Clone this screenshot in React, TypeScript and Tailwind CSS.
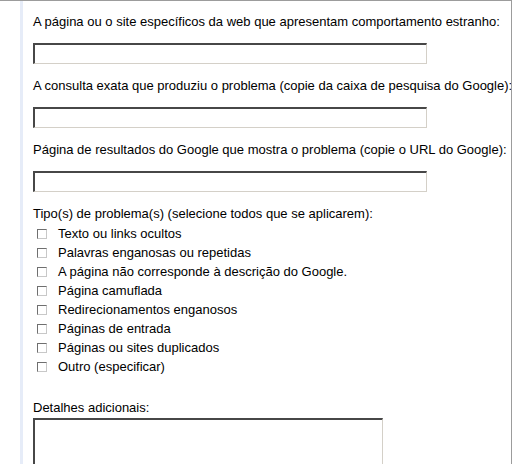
import React from 'react';

const FIELDS = [
  'A página ou o site específicos da web que apresentam comportamento estranho:',
  'A consulta exata que produziu o problema (copie da caixa de pesquisa do Google):',
  'Página de resultados do Google que mostra o problema (copie o URL do Google):',
];

const PROBLEMS = [
  'Texto ou links ocultos',
  'Palavras enganosas ou repetidas',
  'A página não corresponde à descrição do Google.',
  'Página camuflada',
  'Redirecionamentos enganosos',
  'Páginas de entrada',
  'Páginas ou sites duplicados',
  'Outro (especificar)',
];

function Checkbox() {
  return (
    <span className="w-[10px] h-[10px] shrink-0 bg-white border-t border-l border-t-[#6f6f6f] border-l-[#6f6f6f] border-b border-r border-b-[#c8c8c8] border-r-[#c8c8c8]" />
  );
}

export default function App() {
  return (
    <div className="w-[512px] h-[464px] overflow-hidden bg-white border-t border-r border-[#9c9c9c] font-['Liberation_Sans',Arial,sans-serif] text-[13px] leading-[15px] text-black">
      <div className="h-full pl-[20px]">
        <div className="h-full border-l-[3px] border-[#e6ecf8] pl-[10px] pt-[13px] whitespace-nowrap">
          {/* Text fields */}
          {FIELDS.map((label) => (
            <div key={label} className="mb-[14px]">
              <div className="h-[15px]">{label}</div>
              <div className="mt-[14px] w-[394px] h-[21px] bg-white border-t-2 border-l-2 border-t-[#474747] border-l-[#474747] border-b border-r border-b-[#d4d0c8] border-r-[#d4d0c8]" />
            </div>
          ))}

          {/* Problem types */}
          <div className="h-[15px] mb-[3px]">Tipo(s) de problema(s) (selecione todos que se aplicarem):</div>
          {PROBLEMS.map((p) => (
            <label key={p} className="h-[19px] flex items-center pl-[4px] gap-[11px]">
              <Checkbox />
              <span>{p}</span>
            </label>
          ))}

          {/* Additional details */}
          <div className="mt-[24px] h-[15px]">Detalhes adicionais:</div>
          <div className="mt-[3px] w-[350px] h-[80px] bg-white border-t-2 border-l-2 border-t-[#474747] border-l-[#474747] border-r border-r-[#d4d0c8]" />
        </div>
      </div>
    </div>
  );
}
